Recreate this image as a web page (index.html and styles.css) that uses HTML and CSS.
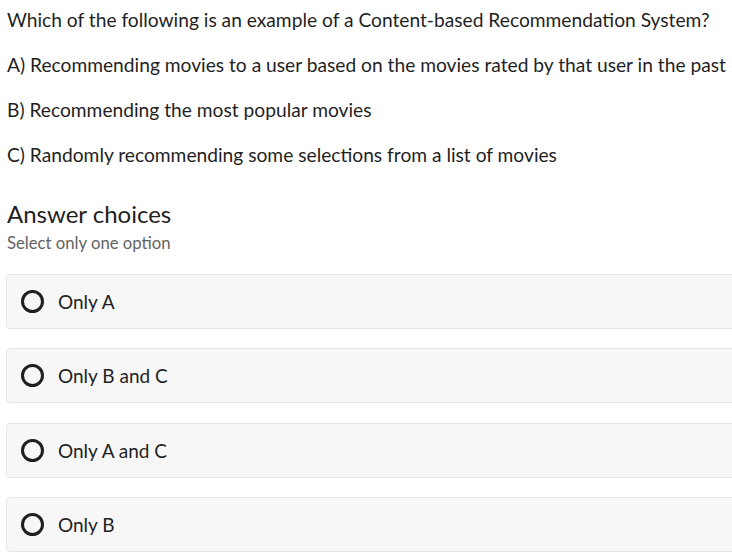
FILE: index.html
```html
<!DOCTYPE html>
<html>
<head>
<meta charset="utf-8">
<link rel="stylesheet" href="styles.css">
</head>
<body>
<div class="page">
  <div class="question">
    <p>Which of the following is an example of a Content-based Recommendation System?</p>
    <p>A) Recommending movies to a user based on the movies rated by that user in the past</p>
    <p>B) Recommending the most popular movies</p>
    <p>C) Randomly recommending some selections from a list of movies</p>
  </div>
  <div class="answers">
    <h2 class="title">Answer choices</h2>
    <div class="hint">Select only one option</div>
    <div class="options">
      <label class="option"><span class="radio"></span><span class="label">Only A</span></label>
      <label class="option"><span class="radio"></span><span class="label">Only B and C</span></label>
      <label class="option"><span class="radio"></span><span class="label">Only A and C</span></label>
      <label class="option"><span class="radio"></span><span class="label">Only B</span></label>
    </div>
  </div>
</div>
</body>
</html>
```
FILE: styles.css
```css
html, body {
  margin: 0;
  padding: 0;
  background: #ffffff;
  overflow: hidden;
}
body {
  font-family: Lato, "Liberation Sans", sans-serif;
  color: #1f1f1f;
}
.page {
  width: 760px;
  padding: 9px 0 0 7px;
}
.question p {
  margin: 0 0 23px 0;
  font-size: 19.2px;
  line-height: 22px;
}
.answers {
  margin-top: 33px;
}
.title {
  margin: 0;
  font-size: 24px;
  font-weight: 400;
  line-height: 30px;
  color: #1f1f1f;
}
.hint {
  font-size: 16.7px;
  line-height: 20px;
  color: #636363;
  margin-top: 4px;
}
.options {
  margin-top: 21px;
  margin-left: -1px;
  display: flex;
  flex-direction: column;
  gap: 19.4px;
}
.option {
  display: flex;
  align-items: center;
  height: 53px;
  border: 1px solid #e6e6e6;
  border-radius: 4px;
  background: #f7f7f7;
  padding-left: 14px;
}
.radio {
  width: 17px;
  height: 17px;
  border: 3px solid #1f1f1f;
  border-radius: 50%;
  flex: none;
}
.label {
  margin-left: 14px;
  font-size: 19px;
  color: #1f1f1f;
}
```
